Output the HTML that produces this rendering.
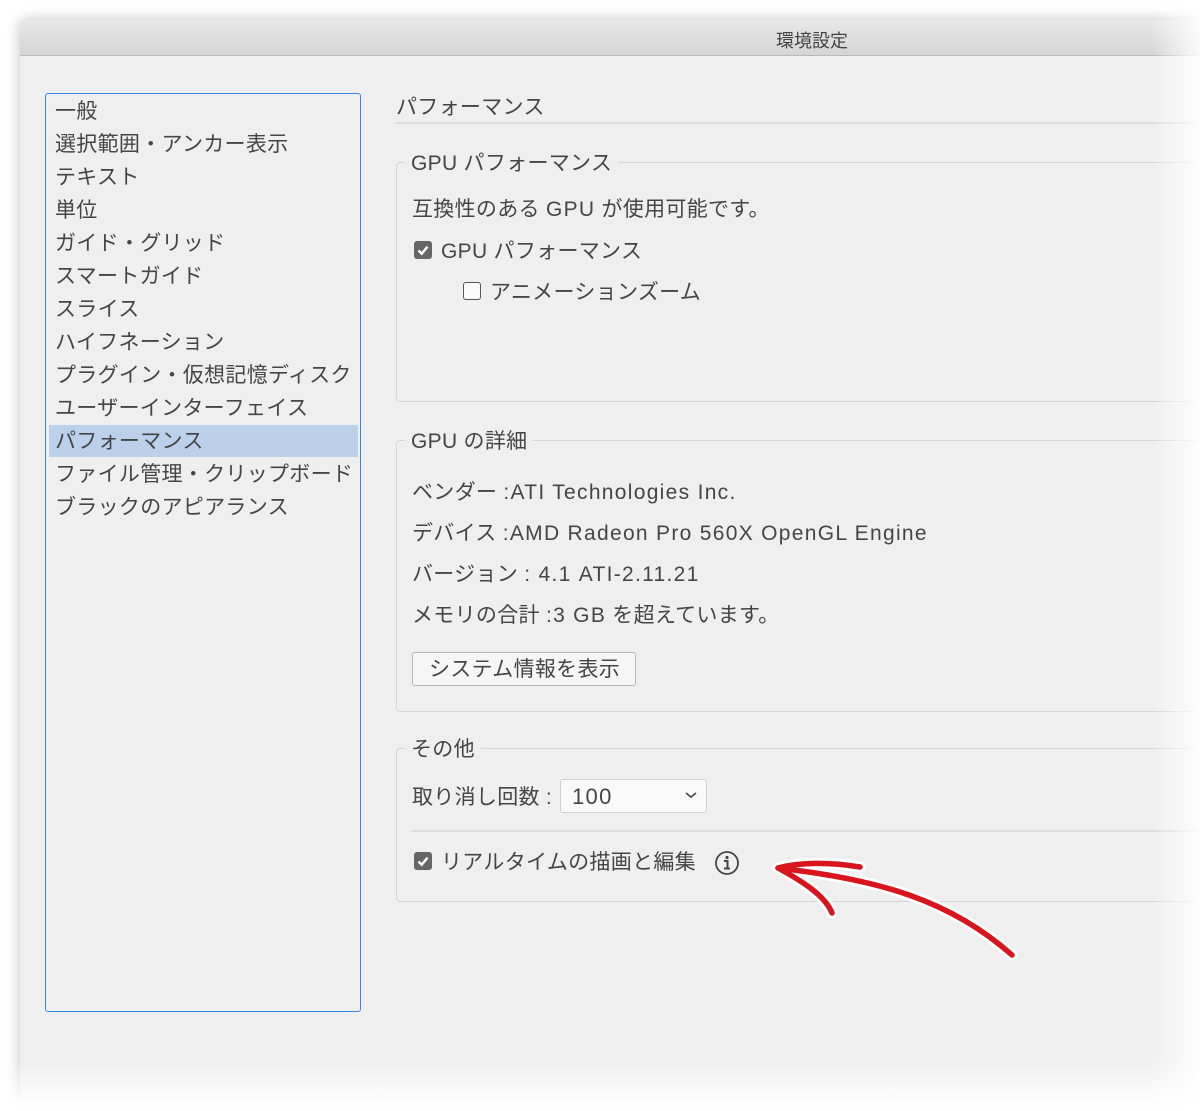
<!DOCTYPE html>
<html><head><meta charset="utf-8"><style>
html,body{margin:0;padding:0;background:#fff;}
body{width:1200px;height:1111px;position:relative;overflow:hidden;font-family:"Liberation Sans","Noto Sans CJK JP",sans-serif;color:#454545;}
.win{position:absolute;left:20px;top:20px;width:1200px;height:1085px;background:#efefef;border-radius:6px 0 0 0;box-shadow:0 0 14px rgba(0,0,0,.25);}
.fade{position:absolute;left:0;top:0;width:1200px;height:1111px;pointer-events:none;background:linear-gradient(to right,rgba(255,255,255,0) 1150px,rgba(255,255,255,.9) 1200px),linear-gradient(to bottom,rgba(255,255,255,0) 1060px,rgba(255,255,255,.95) 1105px);}
.title{position:absolute;left:20px;top:20px;width:1180px;height:35px;background:linear-gradient(#e8e8e8,#d5d5d5);border-bottom:1px solid #b9b9b9;border-radius:6px 0 0 0;}
.title span{position:absolute;left:756px;top:7px;font-size:18px;color:#444;}
.t{position:absolute;font-size:21px;white-space:nowrap;line-height:24px;letter-spacing:0.3px;margin-top:2px;}
.l{letter-spacing:1.3px;}
.list{position:absolute;left:45px;top:93px;width:314px;height:917px;border:1.5px solid #3d86e0;border-radius:3px;background:#efefef;}
.sel{position:absolute;left:49px;top:425px;width:309px;height:32px;background:#bcd0ec;}
.box{position:absolute;left:396px;width:820px;border:1px solid #d6d6d6;border-radius:4px;}
.leg{position:absolute;background:#efefef;padding:0 6px;font-size:21px;line-height:24px;letter-spacing:0.3px;margin-top:2px;}
.cb{position:absolute;width:18px;height:18px;border-radius:3px;}
.cb.on{background:#666;}
.cb.off{border:1.5px solid #555;background:#fafafa;width:16px;height:16px;}
</style></head><body>
<div class="win"></div>
<div class="title"><span>環境設定</span></div>
<div class="list"></div>
<div class="sel"></div>
<div class="t" style="left:55px;top:98px">一般</div>
<div class="t" style="left:55px;top:131px">選択範囲・アンカー表示</div>
<div class="t" style="left:55px;top:164px">テキスト</div>
<div class="t" style="left:55px;top:197px">単位</div>
<div class="t" style="left:55px;top:230px">ガイド・グリッド</div>
<div class="t" style="left:55px;top:263px">スマートガイド</div>
<div class="t" style="left:55px;top:296px">スライス</div>
<div class="t" style="left:55px;top:329px">ハイフネーション</div>
<div class="t" style="left:55px;top:362px">プラグイン・仮想記憶ディスク</div>
<div class="t" style="left:55px;top:395px">ユーザーインターフェイス</div>
<div class="t" style="left:55px;top:428px">パフォーマンス</div>
<div class="t" style="left:55px;top:461px">ファイル管理・クリップボード</div>
<div class="t" style="left:55px;top:494px">ブラックのアピアランス</div>

<div class="t" style="left:396px;top:94px">パフォーマンス</div>
<div style="position:absolute;left:396px;top:122px;width:820px;height:2px;background:#dcdcdc"></div>

<div class="box" style="top:162px;height:238px"></div>
<div class="leg" style="left:405px;top:150px">GPU パフォーマンス</div>
<div class="t" style="left:412px;top:196px">互換性のある <span class="l">GPU</span> が使用可能です。</div>
<div class="cb on" style="left:414px;top:241px"></div><svg style="position:absolute;left:414px;top:241px" width="18" height="18"><path d="M4.5 9.5l3.2 3.2 5.8-7" stroke="#fff" stroke-width="2.4" fill="none"/></svg>
<div class="t" style="left:441px;top:238px">GPU パフォーマンス</div>
<div class="cb off" style="left:463px;top:282px"></div>
<div class="t" style="left:490px;top:279px">アニメーションズーム</div>

<div class="box" style="top:440px;height:270px"></div>
<div class="leg" style="left:405px;top:428px">GPU の詳細</div>
<div class="t" style="left:412px;top:479px">ベンダー <span class="l">:ATI Technologies Inc.</span></div>
<div class="t" style="left:412px;top:520px">デバイス <span class="l">:AMD Radeon Pro 560X OpenGL Engine</span></div>
<div class="t" style="left:412px;top:561px">バージョン <span class="l">: 4.1 ATI-2.11.21</span></div>
<div class="t" style="left:412px;top:602px">メモリの合計 <span class="l">:3 GB</span> を超えています。</div>
<div style="position:absolute;left:412px;top:652px;width:222px;height:32px;border:1px solid #b5b5b5;border-radius:3px;background:#f6f6f6"></div>
<div class="t" style="left:429px;top:656px">システム情報を表示</div>

<div class="box" style="top:748px;height:152px"></div>
<div class="leg" style="left:405px;top:736px">その他</div>
<div class="t" style="left:412px;top:784px">取り消し回数 :</div>
<div style="position:absolute;left:560px;top:779px;width:145px;height:32px;border:1px solid #d0d0d0;border-radius:3px;background:#fafafa"></div>
<div class="t l" style="left:572px;top:783px;font-size:22px">100</div>
<svg style="position:absolute;left:684px;top:790px" width="14" height="10"><path d="M2 3l5 4 5-4" stroke="#444" stroke-width="1.6" fill="none"/></svg>
<div style="position:absolute;left:412px;top:830px;width:804px;height:2px;background:#dcdcdc"></div>
<div class="cb on" style="left:414px;top:852px"></div><svg style="position:absolute;left:414px;top:852px" width="18" height="18"><path d="M4.5 9.5l3.2 3.2 5.8-7" stroke="#fff" stroke-width="2.4" fill="none"/></svg>
<div class="t" style="left:441px;top:849px">リアルタイムの描画と編集</div>
<svg style="position:absolute;left:713px;top:849px" width="28" height="28"><circle cx="14" cy="14" r="11" stroke="#444" stroke-width="1.8" fill="none"/><circle cx="14" cy="8.5" r="1.6" fill="#444"/><path d="M11 12h3.5v7M11 19.5h6" stroke="#444" stroke-width="2" fill="none"/></svg>

<svg style="position:absolute;left:0;top:0" width="1200" height="1111">
<g fill="none" stroke="#fff" stroke-width="11" stroke-linecap="round" stroke-linejoin="round">
<path d="M1012 955 C 950 900, 880 880, 778 868"/>
<path d="M860 867 C 830 862, 800 862, 778 868 C 800 880, 825 895, 832 913"/>
</g>
<g fill="none" stroke="#d8141c" stroke-width="5.5" stroke-linecap="round" stroke-linejoin="round">
<path d="M1012 955 C 950 900, 880 880, 778 868"/>
<path d="M860 867 C 830 862, 800 862, 778 868 C 800 880, 825 895, 832 913"/>
</g>
</svg>
<div class="fade"></div>
</body></html>
